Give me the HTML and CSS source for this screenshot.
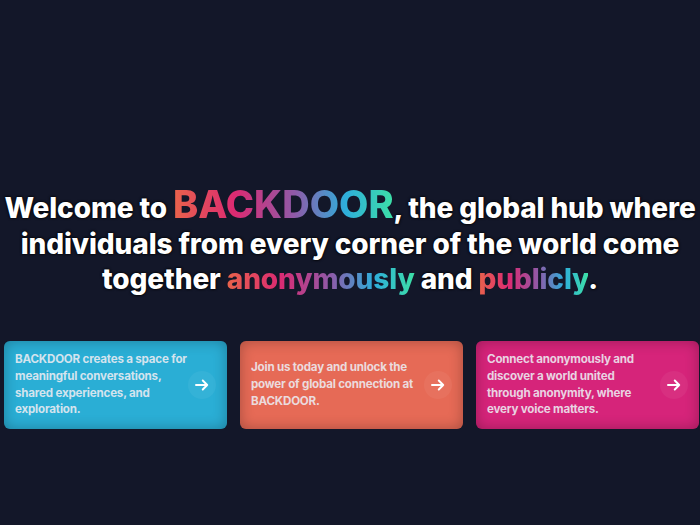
FILE: index.html
```html
<!DOCTYPE html>
<html>
<head>
<meta charset="utf-8">
<link rel="stylesheet" href="styles.css">
</head>
<body>
<main class="page">
  <h1 class="headline">
    Welcome to <span class="brand grad">BACKDOOR</span>, the global hub where individuals from every corner of the world come together <span class="grad grad-a">anonymously</span> and <span class="grad grad-b">publicly</span>.
  </h1>
  <section class="cards">
    <div class="card card-blue">
      <p class="card-text">BACKDOOR creates a space for meaningful conversations, shared experiences, and exploration.</p>
      <span class="arrow"><svg viewBox="0 0 24 24" width="18" height="18"><path d="M4 12h15M13 6l6 6-6 6" fill="none" stroke="#fff" stroke-width="2.6" stroke-linecap="round" stroke-linejoin="round"/></svg></span>
    </div>
    <div class="card card-orange">
      <p class="card-text">Join us today and unlock the power of global connection at BACKDOOR.</p>
      <span class="arrow"><svg viewBox="0 0 24 24" width="18" height="18"><path d="M4 12h15M13 6l6 6-6 6" fill="none" stroke="#fff" stroke-width="2.6" stroke-linecap="round" stroke-linejoin="round"/></svg></span>
    </div>
    <div class="card card-pink">
      <p class="card-text">Connect anonymously and discover a world united through anonymity, where every voice matters.</p>
      <span class="arrow"><svg viewBox="0 0 24 24" width="18" height="18"><path d="M4 12h15M13 6l6 6-6 6" fill="none" stroke="#fff" stroke-width="2.6" stroke-linecap="round" stroke-linejoin="round"/></svg></span>
    </div>
  </section>
</main>
</body>
</html>
```
FILE: styles.css
```css
html, body {
  margin: 0;
  padding: 0;
  background: #131729;
  height: 100%;
  overflow: hidden;
}
.page {
  font-family: Inter, "Noto Sans", sans-serif;
  padding-top: 185px;
  display: flex;
  flex-direction: column;
  align-items: center;
}
.headline {
  margin: 0 -30px;
  width: 760px;
  text-align: center;
  color: #ffffff;
  font-size: 28px;
  font-weight: 800;
  line-height: 35.5px;
  letter-spacing: -0.1px;
  text-shadow: 0 0 3px #000, 0 0 2px #000;
}
.grad {
  background: linear-gradient(90deg, #e9634b 0%, #dc2a72 28%, #8f5aa8 55%, #2eaedb 78%, #3de0a6 100%);
  -webkit-background-clip: text;
  background-clip: text;
  color: transparent;
  text-shadow: none;
}
.brand {
  font-size: 38px;
  line-height: 1;
  letter-spacing: 0;
}
.cards {
  margin-top: 43px;
  display: grid;
  grid-template-columns: 223px 223px 223px;
  gap: 13px;
  width: 700px;
  padding-left: 4px;
  box-sizing: border-box;
}
.card {
  height: 88px;
  border-radius: 6px;
  display: flex;
  align-items: center;
  justify-content: space-between;
  padding: 0 11px 0 11px;
  box-sizing: border-box;
  box-shadow: inset 0 0 14px rgba(0,0,0,0.28);
}
.card-blue { background: #2aaed5; }
.card-orange { background: #e66a56; }
.card-pink { background: #d6247a; }
.card-text {
  margin: 0 -6px 0 0;
  width: 173px;
  flex: none;
  color: rgba(236,236,242,0.88);
  font-size: 11.6px;
  font-weight: 700;
  line-height: 16.8px;
  letter-spacing: -0.2px;
}
.arrow {
  flex: none;
  width: 28px;
  height: 28px;
  border-radius: 50%;
  display: flex;
  align-items: center;
  justify-content: center;
  background: rgba(255,255,255,0.05);
}
```
